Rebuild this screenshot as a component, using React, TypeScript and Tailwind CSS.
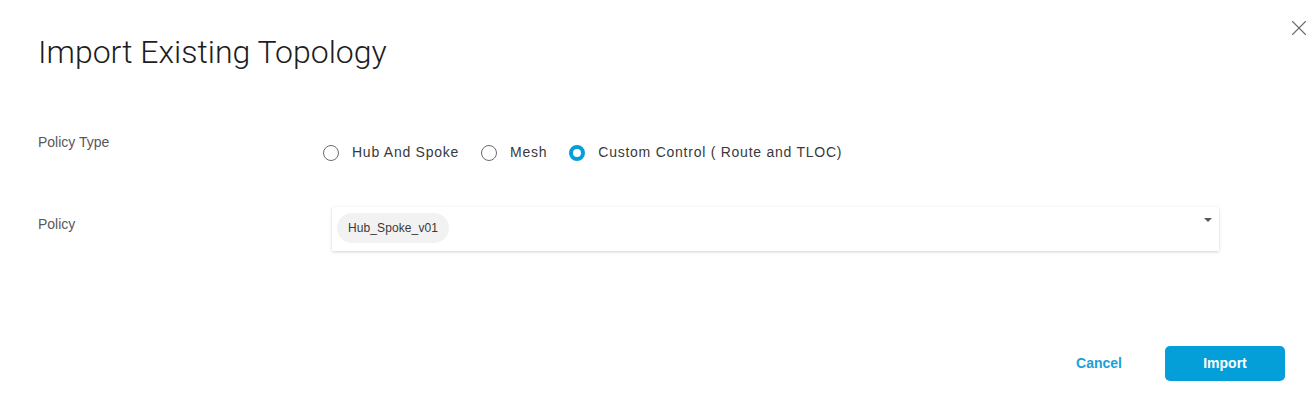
import { X } from "lucide-react";

const types = [
  { label: "Hub And Spoke", checked: false },
  { label: "Mesh", checked: false },
  { label: "Custom Control ( Route and TLOC)", checked: true },
];

function Radio({ label, checked }: { label: string; checked: boolean }) {
  return (
    <label className="flex items-center mr-[22px]">
      <span
        className={
          checked
            ? "w-4 h-4 rounded-full border-[4px] border-[#049fd9] bg-white"
            : "w-4 h-4 rounded-full border border-[#6b6b6b] bg-white"
        }
      />
      <span className="ml-[13px] text-[14px] tracking-[0.75px] text-[#39393b]">{label}</span>
    </label>
  );
}

export default function App() {
  return (
    <div className="relative w-[1313px] h-[417px] bg-white font-['Liberation_Sans',Arial,sans-serif]">
      <button className="absolute right-[1px] top-[15px] text-[#6b6b6b]">
        <X size={26} strokeWidth={1} />
      </button>
      <div className="pl-[38px] pr-[28px] pt-[32px]">
        <h1 className="text-[32px] leading-[40px] font-light text-[#1d1d1f] font-['Roboto',sans-serif]">
          Import Existing Topology
        </h1>

        <div className="flex mt-[61px]">
          <div className="w-[285px] text-[14px] text-[#58585b] leading-[18px]">Policy Type</div>
          <div className="flex mt-[9px]">
            {types.map((t) => (
              <Radio key={t.label} label={t.label} checked={t.checked} />
            ))}
          </div>
        </div>

        <div className="flex mt-[44px]">
          <div className="w-[294px] pt-[8px] text-[14px] text-[#58585b] leading-[18px]">Policy</div>
          <div className="relative w-[887px] h-[44px] bg-white shadow-[0_1px_3px_rgba(0,0,0,0.18)] flex items-start pl-[5px] pt-[6px]">
            <span className="rounded-full bg-[#f2f2f2] h-[30px] px-[11px] flex items-center text-[12px] tracking-[0.1px] text-[#39393b]">
              Hub_Spoke_v01
            </span>
            <span className="absolute right-[7px] top-[11px] w-0 h-0 border-l-[4px] border-r-[4px] border-t-[4px] border-l-transparent border-r-transparent border-t-[#58585b]" />
          </div>
        </div>

        <div className="flex justify-end items-center mt-[95px]">
          <button className="text-[14px] font-bold text-[#1ba0d8] mr-[43px]">Cancel</button>
          <button className="w-[120px] h-[35px] rounded-[5px] bg-[#049fd9] text-white text-[14px] font-bold">
            Import
          </button>
        </div>
      </div>
    </div>
  );
}
